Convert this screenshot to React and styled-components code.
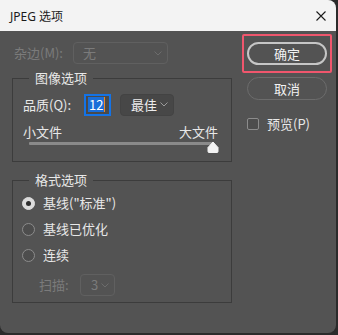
import styled, { createGlobalStyle } from "styled-components";

const GlobalStyle = createGlobalStyle`
  html, body {
    margin: 0;
    padding: 0;
    background: #2b2b2b;
  }
  body {
    font-family: "Noto Sans CJK SC", "Noto Sans", sans-serif;
  }
`;

const Window = styled.div`
  width: 336px;
  height: 333px;
  background: #535353;
  border-radius: 0 8px 8px 8px;
  overflow: hidden;
  display: flex;
  flex-direction: column;
`;

const TitleBar = styled.div`
  height: 31px;
  flex-shrink: 0;
  background: #f3f3f3;
  display: flex;
  align-items: center;
  justify-content: space-between;
  padding: 0 10px;
  color: #1b1b1b;
  font-family: "Noto Sans", "Noto Sans CJK SC", sans-serif;
  font-size: 12px;
`;

const Body = styled.div`
  display: flex;
  gap: 10px;
  padding: 3px 0 0 12px;
  color: #e8e8e8;
  font-size: 13px;
  line-height: 18px;
`;

const LeftCol = styled.div`
  width: 220px;
  padding-top: 8px;
  display: flex;
  flex-direction: column;
`;

const RightCol = styled.div`
  width: 90px;
  display: flex;
  flex-direction: column;
`;

const Row = styled.div`
  display: flex;
  align-items: center;
  height: ${({ $h }) => $h || 22}px;
  padding-left: ${({ $indent }) => $indent || 0}px;
  margin-top: ${({ $mt }) => $mt || 0}px;
`;

const Label = styled.span`
  color: ${({ $disabled }) => ($disabled ? "#7b7b7b" : "#e8e8e8")};
  width: ${({ $w }) => ($w ? `${$w}px` : "auto")};
  flex-shrink: 0;
  white-space: nowrap;
`;

const Select = styled.div`
  box-sizing: border-box;
  width: ${({ $w }) => $w}px;
  height: 22px;
  border-radius: 4px;
  border: 1px solid ${({ $disabled }) => ($disabled ? "#606060" : "#434343")};
  background: ${({ $disabled }) => ($disabled ? "transparent" : "#474747")};
  color: ${({ $disabled }) => ($disabled ? "#7b7b7b" : "#ececec")};
  display: flex;
  align-items: center;
  justify-content: space-between;
  padding: 0 5px 0 ${({ $pl }) => $pl || 9}px;
  margin-left: ${({ $ml }) => $ml || 0}px;
`;

const Group = styled.fieldset`
  margin: ${({ $mt }) => $mt}px 0 0 0;
  padding: ${({ $pt }) => $pt}px 12px ${({ $pb }) => $pb}px 10px;
  border: 1px solid #3c3c3c;
  min-width: 0;
`;

const Legend = styled.legend`
  margin-left: 6px;
  padding: 0 6px;
  color: #e8e8e8;
  line-height: 18px;
`;

const NumberBox = styled.div`
  box-sizing: border-box;
  width: 27px;
  height: 22px;
  border: 2px solid #1473e6;
  background: #4a4a4a;
  display: flex;
  align-items: center;
  padding-left: 2px;
`;

const Selected = styled.span`
  background: #1a6ed8;
  color: #ffffff;
  line-height: 15px;
  padding: 0 1px;
`;

const Caret = styled.span`
  width: 1px;
  height: 15px;
  background: #f08a24;
`;

const SizeLabels = styled.div`
  display: flex;
  justify-content: space-between;
  margin-top: 7px;
  padding-right: 1px;
`;

const Slider = styled.div`
  position: relative;
  height: 11px;
  margin: 0 6px;
`;

const Track = styled.div`
  height: 3px;
  margin-top: 1px;
  background: #8a8a8a;
  border-radius: 1px;
`;

const Thumb = styled.svg`
  position: absolute;
  top: -1px;
  margin-left: -6px;
`;

const RadioRow = styled.div`
  display: flex;
  align-items: center;
  gap: 8px;
  height: 26px;
  margin-left: -1px;
`;

const Radio = styled.span`
  box-sizing: border-box;
  width: 13px;
  height: 13px;
  border-radius: 50%;
  display: flex;
  align-items: center;
  justify-content: center;
  background: ${({ $checked }) => ($checked ? "#dcdcdc" : "#4d4d4d")};
  border: 1px solid ${({ $checked }) => ($checked ? "#dcdcdc" : "#8c8c8c")};
  &::after {
    content: "";
    display: ${({ $checked }) => ($checked ? "block" : "none")};
    width: 5px;
    height: 5px;
    border-radius: 50%;
    background: #2e2e2e;
  }
`;

const Highlight = styled.div`
  border: 2px solid #f0566d;
  border-radius: 2px;
  padding: 6px 3px;
`;

const Button = styled.div`
  box-sizing: border-box;
  width: 80px;
  height: 23px;
  border-radius: 12px;
  border: ${({ $primary }) => ($primary ? "2px solid #c6c6c6" : "1.5px solid #6c6c6c")};
  display: flex;
  align-items: center;
  justify-content: center;
  color: #f2f2f2;
  margin-left: ${({ $ml }) => $ml || 0}px;
  margin-top: ${({ $mt }) => $mt || 0}px;
`;

const CheckRow = styled.div`
  display: flex;
  align-items: center;
  gap: 8px;
  margin: 15px 0 0 5px;
  height: 18px;
`;

const Checkbox = styled.span`
  box-sizing: border-box;
  width: 12px;
  height: 12px;
  border: 1px solid #8c8c8c;
  border-radius: 2px;
  background: #4d4d4d;
`;

const Chevron = ({ color }) => (
  <svg width="8" height="5" viewBox="0 0 8 5">
    <path d="M0.5 0.5 L4 4 L7.5 0.5" fill="none" stroke={color} strokeWidth="1" />
  </svg>
);

const CloseIcon = () => (
  <svg width="10" height="10" viewBox="0 0 10 10">
    <path d="M0.5 0.5 L9.5 9.5 M9.5 0.5 L0.5 9.5" stroke="#1b1b1b" strokeWidth="1.1" />
  </svg>
);

const quality = 12;

export default function App() {
  return (
    <>
      <GlobalStyle />
      <Window>
        <TitleBar>
          <span>JPEG 选项</span>
          <CloseIcon />
        </TitleBar>
        <Body>
          <LeftCol>
            <Row $indent={2}>
              <Label $disabled $w={59}>杂边(M):</Label>
              <Select $disabled $w={95}>
                <span>无</span>
                <Chevron color="#6c6c6c" />
              </Select>
            </Row>

            <Group $mt={5} $pt={6} $pb={8}>
              <Legend>图像选项</Legend>
              <Row $h={23}>
                <Label $w={61}>品质(Q):</Label>
                <NumberBox>
                  <Selected>12</Selected>
                  <Caret />
                </NumberBox>
                <Select $w={54} $ml={9} $pl={10}>
                  <span>最佳</span>
                  <Chevron color="#9a9a9a" />
                </Select>
              </Row>
              <SizeLabels>
                <span>小文件</span>
                <span>大文件</span>
              </SizeLabels>
              <Slider>
                <Track />
                <Thumb
                  width="12"
                  height="12"
                  viewBox="0 0 12 12"
                  style={{ left: `${(quality / 12) * 100}%` }}
                >
                  <path
                    d="M6 1 L11 6.5 L11 10.5 Q11 11.5 10 11.5 L2 11.5 Q1 11.5 1 10.5 L1 6.5 Z"
                    fill="#f2f2f2"
                    stroke="#f2f2f2"
                    strokeLinejoin="round"
                  />
                </Thumb>
              </Slider>
            </Group>

            <Group $mt={9} $pt={1} $pb={6}>
              <Legend>格式选项</Legend>
              <RadioRow>
                <Radio $checked />
                <span>基线("标准")</span>
              </RadioRow>
              <RadioRow>
                <Radio />
                <span>基线已优化</span>
              </RadioRow>
              <RadioRow>
                <Radio />
                <span>连续</span>
              </RadioRow>
              <Row $indent={16} $mt={6}>
                <Label $disabled $w={41}>扫描:</Label>
                <Select $disabled $w={35} $pl={10}>
                  <span>3</span>
                  <Chevron color="#6c6c6c" />
                </Select>
              </Row>
            </Group>
          </LeftCol>

          <RightCol>
            <Highlight>
              <Button $primary>确定</Button>
            </Highlight>
            <Button $ml={5} $mt={4}>取消</Button>
            <CheckRow>
              <Checkbox />
              <span>预览(P)</span>
            </CheckRow>
          </RightCol>
        </Body>
      </Window>
    </>
  );
}
